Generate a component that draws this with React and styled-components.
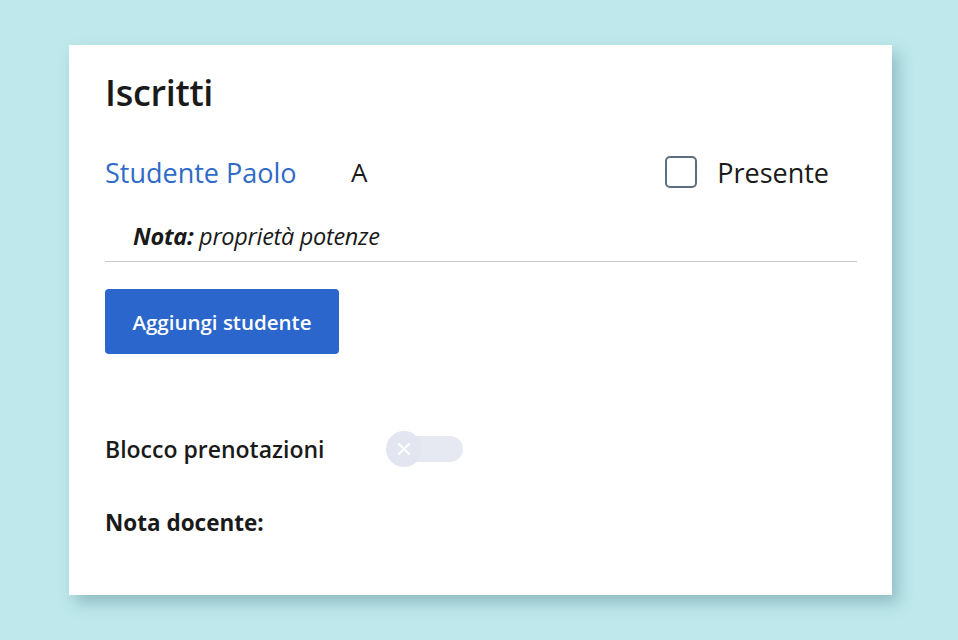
import styled, { createGlobalStyle } from "styled-components";

const GlobalStyle = createGlobalStyle`
  html, body {
    margin: 0;
    padding: 0;
    background: #bee8eb;
    font-family: "Open Sans", "Lato", sans-serif;
  }
`;

const Page = styled.div`
  width: 958px;
  height: 640px;
  box-sizing: border-box;
  padding: 45px 66px 0 69px;
`;

const Card = styled.div`
  width: 823px;
  height: 550px;
  box-sizing: border-box;
  background: #ffffff;
  padding: 28px 35px 0 36px;
  box-shadow: 6px 8px 14px rgba(60, 110, 120, 0.35);
`;

const Title = styled.h2`
  margin: 0;
  font-size: 36px;
  font-weight: 600;
  color: #1a1a1a;
  line-height: 40px;
  letter-spacing: -0.3px;
`;

const StudentRow = styled.div`
  display: flex;
  align-items: center;
  margin-top: 39px;
  height: 40px;
`;

const StudentName = styled.a`
  color: #2f6bc7;
  font-size: 27px;
  text-decoration: none;
  width: 246px;
`;

const Grade = styled.span`
  font-size: 26px;
  color: #1a1a1a;
  flex: 1;
`;

const CheckLabel = styled.label`
  display: flex;
  align-items: center;
  gap: 20px;
  font-size: 27px;
  color: #1a1a1a;
  margin-right: 28px;
`;

const Box = styled.span`
  width: 28px;
  height: 28px;
  border: 2px solid #5c6f82;
  border-radius: 5px;
`;

const NoteLine = styled.div`
  padding: 14px 0 11px 28px;
  font-size: 23.5px;
  line-height: 28px;
  font-style: italic;
  color: #1a1a1a;
  border-bottom: 1px solid #c5c7c9;
  margin-top: 16px;
  letter-spacing: -0.3px;

  strong {
    font-weight: 700;
  }
`;

const Button = styled.button`
  margin-top: 27px;
  width: 234px;
  height: 65px;
  border: none;
  border-radius: 4px;
  background: #2a66cc;
  color: #ffffff;
  font-family: inherit;
  font-size: 20.5px;
  font-weight: 600;
`;

const ToggleRow = styled.div`
  display: flex;
  align-items: center;
  margin-top: 77px;
  height: 36px;
`;

const Label = styled.span`
  font-size: 23px;
  font-weight: 600;
  color: #1a1a1a;
  width: 281px;
`;

const Switch = styled.span`
  position: relative;
  width: 77px;
  height: 36px;
  display: flex;
  align-items: center;
`;

const Track = styled.span`
  margin-left: 18px;
  width: 59px;
  height: 26px;
  border-radius: 13px;
  background: #e6e9f2;
`;

const Knob = styled.span`
  position: absolute;
  left: 0;
  top: 0;
  width: 36px;
  height: 36px;
  border-radius: 50%;
  background: #e3e6f0;
  display: flex;
  align-items: center;
  justify-content: center;
`;

const NoteTitle = styled.div`
  margin-top: 41px;
  font-size: 22.5px;
  line-height: 30px;
  font-weight: 700;
  color: #1a1a1a;
`;

export default function App() {
  return (
    <>
      <GlobalStyle />
      <Page>
        <Card>
          <Title>Iscritti</Title>
          <StudentRow>
            <StudentName href="#">Studente Paolo</StudentName>
            <Grade>A</Grade>
            <CheckLabel>
              <Box />
              Presente
            </CheckLabel>
          </StudentRow>
          <NoteLine>
            <strong>Nota:</strong> proprietà potenze
          </NoteLine>
          <Button>Aggiungi studente</Button>
          <ToggleRow>
            <Label>Blocco prenotazioni</Label>
            <Switch>
              <Track />
              <Knob>
                <svg width="16" height="16" viewBox="0 0 16 16">
                  <path d="M3 3 L13 13 M13 3 L3 13" stroke="#ffffff" strokeWidth="2" strokeLinecap="round" />
                </svg>
              </Knob>
            </Switch>
          </ToggleRow>
          <NoteTitle>Nota docente:</NoteTitle>
        </Card>
      </Page>
    </>
  );
}
